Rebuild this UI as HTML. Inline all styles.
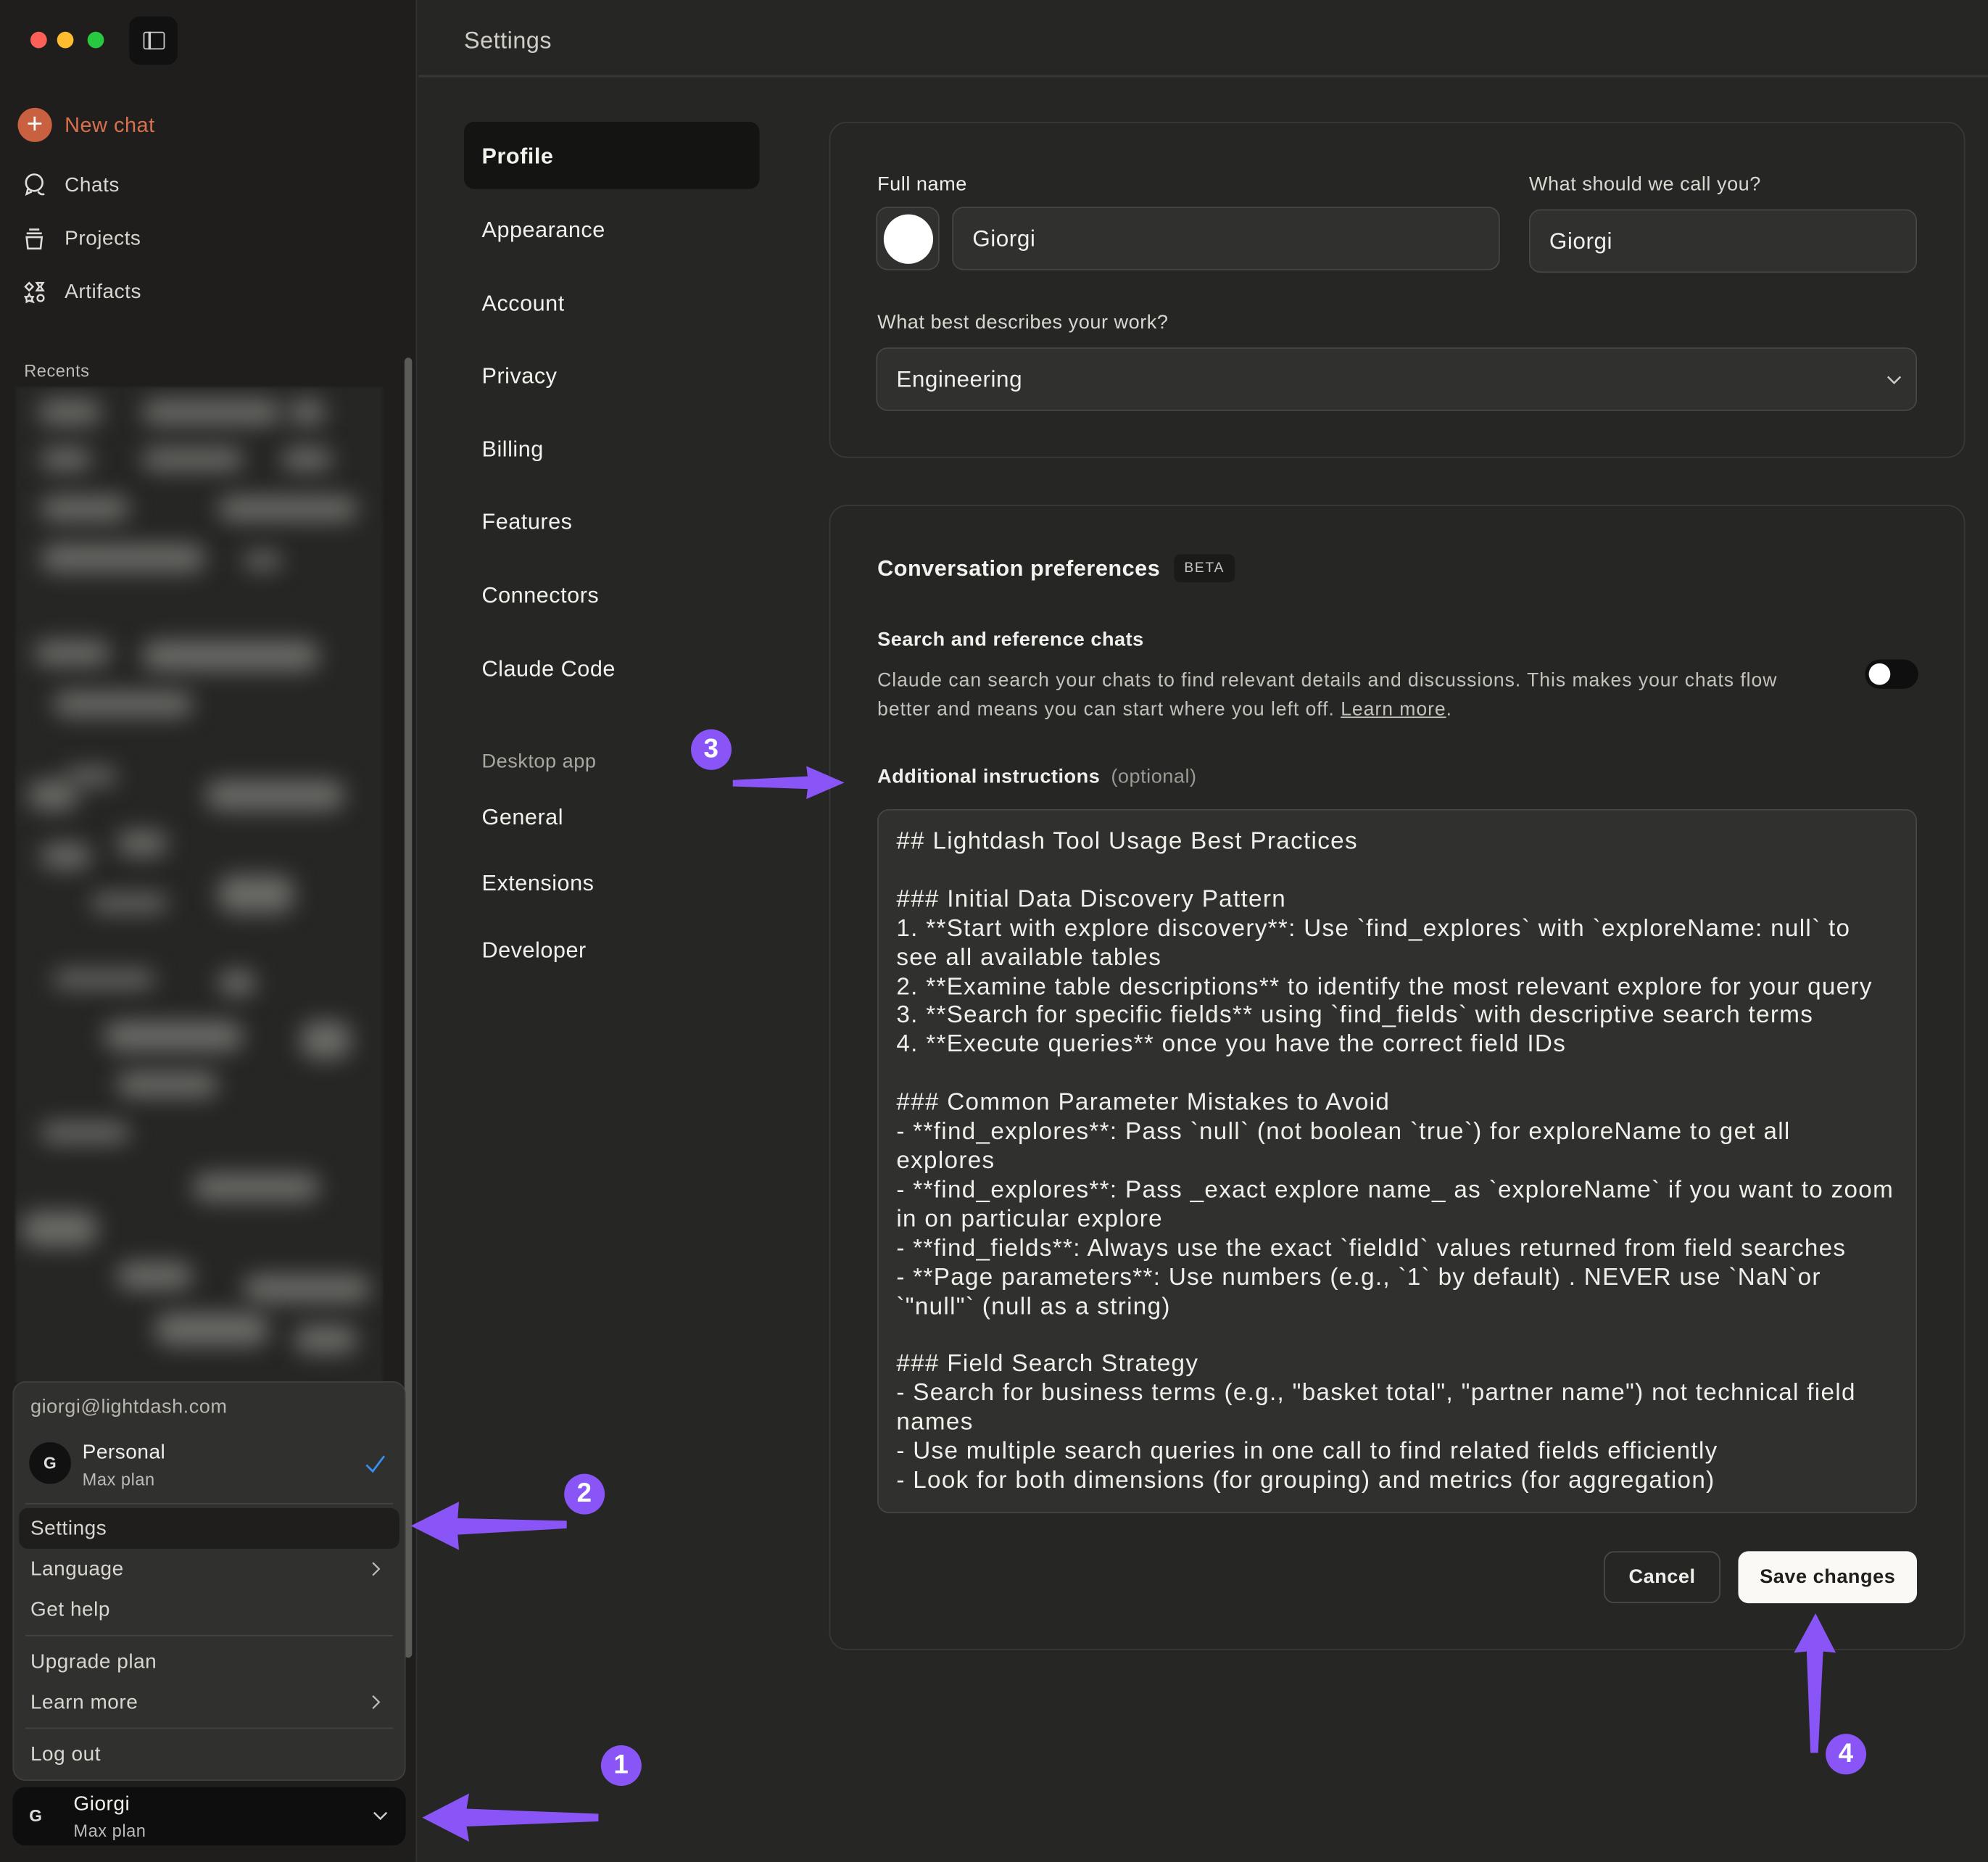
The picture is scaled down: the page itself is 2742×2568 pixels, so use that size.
<!DOCTYPE html>
<html><head><meta charset="utf-8"><style>
*{box-sizing:border-box;margin:0;padding:0}
html,body{width:2742px;height:2568px;overflow:hidden;background:#262624}
#w{width:1568px;height:1468px;position:relative;transform:scale(1.7487,1.7493);transform-origin:0 0;font-family:"Liberation Sans",sans-serif;color:#ecebe6;background:#262624;letter-spacing:0.3px}
.a{position:absolute}
#sb{left:0;top:0;width:329px;height:1468px;background:#1f1e1d;border-right:1px solid #333}
.nav{font-size:16px;color:#d8d6cf}
.set{font-size:17.5px;color:#f2f1ec}
.card{border:1px solid #393937;border-radius:14px;background:#262624}
.inp{background:#30302e;border:1px solid #464644;border-radius:9px;font-size:18px;color:#f0efea;padding-left:15px;display:flex;align-items:center}
.lbl{font-size:15.5px;color:#d9d7d0}
.mi{font-size:16px;color:#d8d6cf;left:24px}
#ta{left:692px;top:638px;width:820px;height:555px;background:#30302e;border:1px solid #464644;border-radius:9px;padding:14px 14px;font-size:19px;letter-spacing:0.75px;line-height:22.9px;color:#f0efea;white-space:pre;overflow:hidden}
.blob{position:absolute;background:#6b6b68;border-radius:12px;filter:blur(9px)}
.badge{position:absolute;width:32px;height:32px;border-radius:50%;background:#8a55f7;color:#fff;font-weight:bold;font-size:21px;display:flex;align-items:center;justify-content:center}
</style></head><body><div id="w">
<div id="sb" class="a">
 <div class="a" style="left:24px;top:25px;width:13px;height:13px;border-radius:50%;background:#fe5f57"></div>
 <div class="a" style="left:45px;top:25px;width:13px;height:13px;border-radius:50%;background:#febc2e"></div>
 <div class="a" style="left:69px;top:25px;width:13px;height:13px;border-radius:50%;background:#28c840"></div>
 <div class="a" style="left:102px;top:13px;width:38px;height:38px;border-radius:8px;background:#111"></div>
 <div class="a" style="left:113px;top:25px;width:17px;height:14px;border:1.5px solid #ccc;border-radius:2px"></div>
 <div class="a" style="left:117px;top:25px;width:1.5px;height:14px;background:#ccc"></div>
 <div class="a" style="left:14px;top:85px;width:27px;height:27px;border-radius:50%;background:#c9603f;color:#fff;font-size:22px;line-height:26px;text-align:center">+</div>
 <div class="a" style="left:51px;top:90px;font-size:16.5px;color:#d9704d">New chat</div>
 <svg class="a" style="left:18px;top:136px" width="20" height="20" viewBox="0 0 20 20" fill="none" stroke="#ddd" stroke-width="1.5"><circle cx="9" cy="8" r="6.5"/><path d="M4 13 L3 17 L7 15 M12 15 Q14 18 17 17"/></svg>
 <div class="a nav" style="left:51px;top:138px">Chats</div>
 <svg class="a" style="left:18px;top:179px" width="20" height="20" viewBox="0 0 20 20" fill="none" stroke="#ddd" stroke-width="1.5"><path d="M5 2h8M3 5h12M3 8h12l-1 9H4z"/></svg>
 <div class="a nav" style="left:51px;top:180px">Projects</div>
 <svg class="a" style="left:18px;top:221px" width="20" height="20" viewBox="0 0 20 20" fill="none" stroke="#ddd" stroke-width="1.4"><path d="M5 2l3 3-3 3-3-3z M11 2h5l-2 3 2 3h-5l2-3z M5 11l1 2 2 0-1 2 1 2-3-1-2 1 0-2-1-2 2 0z"/><circle cx="14" cy="14" r="2.5"/></svg>
 <div class="a nav" style="left:51px;top:222px">Artifacts</div>
 <div class="a" style="left:19px;top:285px;font-size:13.5px;color:#bdbbb4">Recents</div>
 <div class="a" style="left:12px;top:305px;width:290px;height:785px;overflow:hidden;background:#262624;filter:blur(1px)">
  <div class="blob" style="left:18px;top:10px;width:50px;height:20px"></div><div class="blob" style="left:100px;top:10px;width:110px;height:20px"></div><div class="blob" style="left:215px;top:10px;width:30px;height:20px"></div>
  <div class="blob" style="left:20px;top:48px;width:40px;height:18px"></div><div class="blob" style="left:100px;top:48px;width:80px;height:18px"></div><div class="blob" style="left:210px;top:48px;width:40px;height:18px"></div>
  <div class="blob" style="left:20px;top:86px;width:70px;height:20px"></div><div class="blob" style="left:160px;top:86px;width:110px;height:20px"></div>
  <div class="blob" style="left:20px;top:124px;width:130px;height:22px"></div><div class="blob" style="left:180px;top:130px;width:30px;height:14px"></div>
  <div class="blob" style="left:15px;top:200px;width:60px;height:20px"></div><div class="blob" style="left:100px;top:200px;width:140px;height:24px"></div>
  <div class="blob" style="left:30px;top:240px;width:110px;height:20px"></div><div class="blob" style="left:40px;top:300px;width:40px;height:14px"></div>
  <div class="blob" style="left:10px;top:310px;width:40px;height:24px"></div><div class="blob" style="left:150px;top:310px;width:110px;height:24px"></div>
  <div class="blob" style="left:80px;top:350px;width:40px;height:20px"></div><div class="blob" style="left:20px;top:360px;width:40px;height:20px"></div>
  <div class="blob" style="left:160px;top:385px;width:60px;height:30px"></div><div class="blob" style="left:60px;top:400px;width:60px;height:14px"></div>
  <div class="blob" style="left:160px;top:460px;width:30px;height:20px"></div><div class="blob" style="left:30px;top:460px;width:80px;height:14px"></div>
  <div class="blob" style="left:70px;top:500px;width:110px;height:24px"></div><div class="blob" style="left:225px;top:500px;width:40px;height:30px"></div>
  <div class="blob" style="left:80px;top:540px;width:80px;height:20px"></div><div class="blob" style="left:20px;top:580px;width:70px;height:16px"></div>
  <div class="blob" style="left:140px;top:620px;width:100px;height:22px"></div><div class="blob" style="left:5px;top:650px;width:60px;height:28px"></div>
  <div class="blob" style="left:80px;top:690px;width:60px;height:22px"></div><div class="blob" style="left:180px;top:700px;width:100px;height:22px"></div>
  <div class="blob" style="left:110px;top:730px;width:90px;height:26px"></div><div class="blob" style="left:220px;top:740px;width:50px;height:22px"></div>
 </div>
 <div class="a" style="left:319px;top:282px;width:6px;height:1025px;border-radius:3px;background:#5b5b58"></div>
 <div class="a" style="left:10px;top:1089px;width:310px;height:315px;background:#30302e;border:1px solid #3f3f3d;border-radius:10px"></div>
 <div class="a" style="left:24px;top:1101px;font-size:15.5px;color:#b8b6af">giorgi@lightdash.com</div>
 <div class="a" style="left:23px;top:1137px;width:33px;height:33px;border-radius:50%;background:#111;color:#ddd;font-size:13px;font-weight:bold;text-align:center;line-height:33px">G</div>
 <div class="a" style="left:65px;top:1137px;font-size:16px;color:#f0efea">Personal</div>
 <div class="a" style="left:65px;top:1159px;font-size:13.5px;color:#bbb">Max plan</div>
 <svg class="a" style="left:287px;top:1146px" width="18" height="16" viewBox="0 0 18 16"><path d="M2 9l5 5L16 2" stroke="#3a8ef0" stroke-width="1.6" fill="none"/></svg>
 <div class="a" style="left:20px;top:1185px;width:290px;height:1px;background:#444"></div>
 <div class="a" style="left:15px;top:1189px;width:300px;height:32px;background:#1f1e1d;border-radius:7px"></div>
 <div class="a mi" style="top:1197px">Settings</div>
 <div class="a mi" style="top:1229px">Language</div>
 <svg class="a" style="left:291px;top:1230px" width="10" height="14" viewBox="0 0 10 14"><path d="M3 2l5 5-5 5" stroke="#bbb" stroke-width="1.3" fill="none"/></svg>
 <div class="a mi" style="top:1261px">Get help</div>
 <div class="a" style="left:20px;top:1289px;width:290px;height:1px;background:#444"></div>
 <div class="a mi" style="top:1302px">Upgrade plan</div>
 <div class="a mi" style="top:1334px">Learn more</div>
 <svg class="a" style="left:291px;top:1335px" width="10" height="14" viewBox="0 0 10 14"><path d="M3 2l5 5-5 5" stroke="#bbb" stroke-width="1.3" fill="none"/></svg>
 <div class="a" style="left:20px;top:1362px;width:290px;height:1px;background:#444"></div>
 <div class="a mi" style="top:1375px">Log out</div>
 <div class="a" style="left:10px;top:1409px;width:310px;height:46px;background:#0e0e0e;border-radius:10px"></div>
 <div class="a" style="left:23px;top:1424px;font-size:13px;font-weight:bold;color:#ddd">G</div>
 <div class="a" style="left:58px;top:1414px;font-size:16px;color:#f0efea">Giorgi</div>
 <div class="a" style="left:58px;top:1436px;font-size:13.5px;color:#bbb">Max plan</div>
 <svg class="a" style="left:293px;top:1426px" width="14" height="10" viewBox="0 0 14 10"><path d="M2 3l5 5 5-5" stroke="#ccc" stroke-width="1.4" fill="none"/></svg>
</div>
<div class="a" style="left:366px;top:21px;font-size:18.5px;color:#cfcdc6">Settings</div>
<div class="a" style="left:330px;top:59px;width:1238px;height:2px;background:#363634"></div>
<div class="a" style="left:366px;top:96px;width:233px;height:53px;background:#141413;border-radius:8px"></div>
<div class="a set" style="left:380px;top:113px;font-weight:bold">Profile</div>
<div class="a set" style="left:380px;top:171px">Appearance</div>
<div class="a set" style="left:380px;top:229px">Account</div>
<div class="a set" style="left:380px;top:286px">Privacy</div>
<div class="a set" style="left:380px;top:344px">Billing</div>
<div class="a set" style="left:380px;top:401px">Features</div>
<div class="a set" style="left:380px;top:459px">Connectors</div>
<div class="a set" style="left:380px;top:517px">Claude Code</div>
<div class="a" style="left:380px;top:592px;font-size:15.5px;color:#a9a7a0">Desktop app</div>
<div class="a set" style="left:380px;top:634px">General</div>
<div class="a set" style="left:380px;top:686px">Extensions</div>
<div class="a set" style="left:380px;top:739px">Developer</div>

<div class="a card" style="left:654px;top:96px;width:896px;height:265px"></div>
<div class="a lbl" style="left:692px;top:137px;color:#f0efea">Full name</div>
<div class="a" style="left:691px;top:163px;width:50px;height:50px;background:#30302e;border:1px solid #464644;border-radius:9px"></div>
<div class="a" style="left:697px;top:169px;width:39px;height:39px;border-radius:50%;background:#fff"></div>
<div class="a inp" style="left:751px;top:163px;width:432px;height:50px">Giorgi</div>
<div class="a lbl" style="left:1206px;top:137px">What should we call you?</div>
<div class="a inp" style="left:1206px;top:165px;width:306px;height:50px">Giorgi</div>
<div class="a lbl" style="left:692px;top:246px">What best describes your work?</div>
<div class="a inp" style="left:691px;top:274px;width:821px;height:50px">Engineering</div>
<svg class="a" style="left:1487px;top:294px" width="14" height="10" viewBox="0 0 14 10"><path d="M2 3l5 5 5-5" stroke="#ccc" stroke-width="1.4" fill="none"/></svg>

<div class="a card" style="left:654px;top:398px;width:896px;height:903px"></div>
<div class="a" style="left:692px;top:438px;font-size:17.5px;font-weight:bold;color:#f4f3ee">Conversation preferences</div>
<div class="a" style="left:926px;top:437px;width:48px;height:22px;background:#1a1a19;border-radius:5px;font-size:11px;letter-spacing:1px;color:#c9c7c0;text-align:center;line-height:22px">BETA</div>
<div class="a" style="left:692px;top:496px;font-size:15.5px;font-weight:bold;color:#f0efea">Search and reference chats</div>
<div class="a" style="left:692px;top:525px;width:745px;font-size:15.2px;letter-spacing:0.55px;line-height:23px;color:#c4c2bb">Claude can search your chats to find relevant details and discussions. This makes your chats flow better and means you can start where you left off. <u>Learn more</u>.</div>
<div class="a" style="left:1471px;top:520px;width:42px;height:23px;border-radius:12px;background:#0f0f0f"></div>
<div class="a" style="left:1474px;top:523px;width:17px;height:17px;border-radius:50%;background:#fff"></div>
<div class="a" style="left:692px;top:604px;font-size:15.5px;font-weight:bold;color:#f0efea">Additional instructions <span style="font-weight:normal;color:#9c9a93;margin-left:4px">(optional)</span></div>
<div id="ta" class="a">## Lightdash Tool Usage Best Practices

### Initial Data Discovery Pattern
1. **Start with explore discovery**: Use `find_explores` with `exploreName: null` to
see all available tables
2. **Examine table descriptions** to identify the most relevant explore for your query
3. **Search for specific fields** using `find_fields` with descriptive search terms
4. **Execute queries** once you have the correct field IDs

### Common Parameter Mistakes to Avoid
- **find_explores**: Pass `null` (not boolean `true`) for exploreName to get all
explores
- **find_explores**: Pass _exact explore name_ as `exploreName` if you want to zoom
in on particular explore
- **find_fields**: Always use the exact `fieldId` values returned from field searches
- **Page parameters**: Use numbers (e.g., `1` by default) . NEVER use `NaN`or
`"null"` (null as a string)

### Field Search Strategy
- Search for business terms (e.g., "basket total", "partner name") not technical field
names
- Use multiple search queries in one call to find related fields efficiently
- Look for both dimensions (for grouping) and metrics (for aggregation)</div>
<div class="a" style="left:1265px;top:1223px;width:92px;height:41px;border:1px solid #4a4a48;border-radius:8px;font-size:15.5px;font-weight:bold;color:#f0efea;text-align:center;line-height:40px">Cancel</div>
<div class="a" style="left:1371px;top:1223px;width:141px;height:41px;background:#faf9f5;border-radius:8px;font-size:15.5px;font-weight:bold;color:#1f1e1d;text-align:center;line-height:41px">Save changes</div>

<svg class="a" style="left:0;top:0" width="1568" height="1468" viewBox="0 0 1568 1468" fill="#8a55f7">
 <path d="M472 1430 L472 1436 L368 1440 L370 1452 L333 1433 L370 1414 L368 1426 Z"/>
 <path d="M447 1199 L447 1205 L361 1210 L362 1222 L324 1203 L362 1184 L361 1197 Z"/>
 <path d="M578 615 L578 620 L637 622 L636 630 L666 617 L636 604 L637 612 Z"/>
 <path d="M1428 1382 L1434 1382 L1438 1302 L1448 1303 L1432 1272 L1415 1303 L1425 1302 Z"/>
</svg>
<div class="badge" style="left:474px;top:1376px">1</div>
<div class="badge" style="left:445px;top:1162px">2</div>
<div class="badge" style="left:545px;top:575px">3</div>
<div class="badge" style="left:1440px;top:1367px">4</div>
</div></body></html>
